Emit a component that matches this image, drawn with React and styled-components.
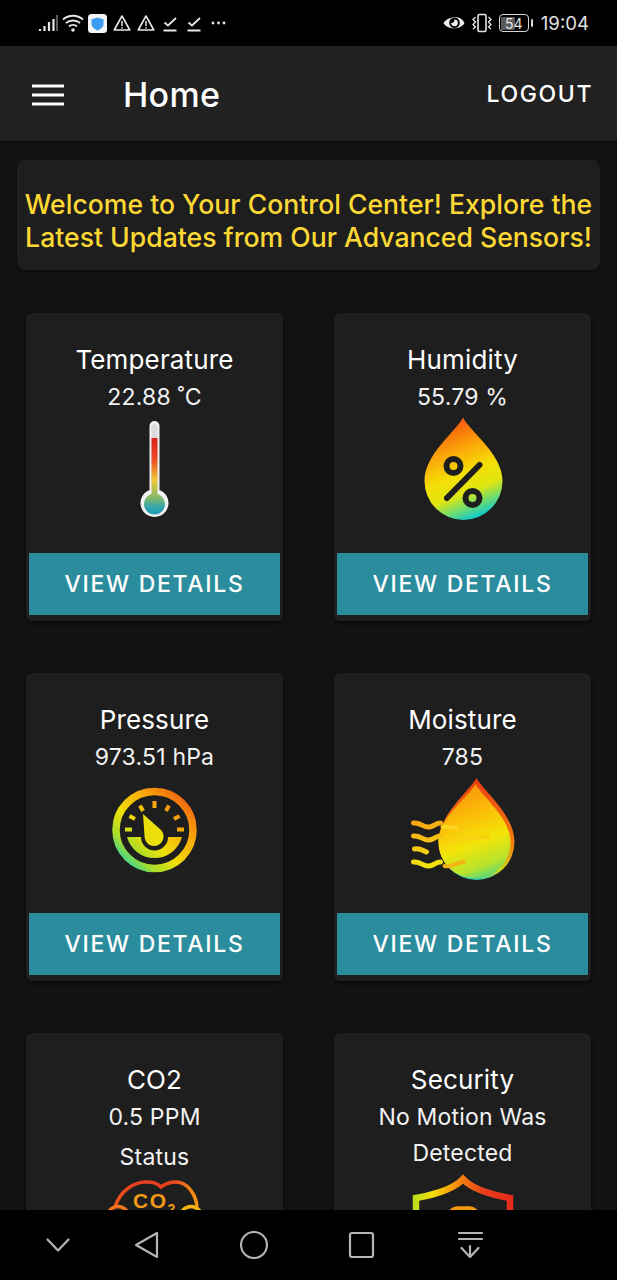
import React from "react";
import styled, { createGlobalStyle } from "styled-components";

const GlobalStyle = createGlobalStyle`
	html, body {
		margin: 0;
		padding: 0;
		background: #121212;
	}
	* {
		box-sizing: border-box;
	}
`;

const Screen = styled.div`
	width: 617px;
	height: 1280px;
	display: flex;
	flex-direction: column;
	overflow: hidden;
	background-color: #121212;
	font-family: "Inter", "Noto Sans", sans-serif;
	color: #fff;
`;

const StatusBar = styled.div`
	height: 46px;
	flex: none;
	background-color: #000;
	display: flex;
	align-items: center;
	justify-content: space-between;
	padding: 0 28px 0 38px;
`;

const StatusGroup = styled.div`
	display: flex;
	align-items: center;
	gap: ${(props) => props.$gap}px;
`;

const Clock = styled.span`
	font-size: 18.6px;
	color: #e0e0e0;
	margin-left: 2px;
`;

const AppBar = styled.header`
	height: 95px;
	flex: none;
	background-color: #212121;
	display: flex;
	align-items: center;
	padding: 2px 24px 0 32px;
	box-shadow: 0 2px 4px rgba(0, 0, 0, 0.4);
	z-index: 1;
`;

const MenuIcon = styled.svg`
	display: block;
	flex: none;
`;

const AppTitle = styled.h1`
	margin: 0 0 0 59px;
	flex: 1;
	font-size: 34px;
	font-weight: 500;
	letter-spacing: 0.3px;
	line-height: 40px;
`;

const LogoutButton = styled.button`
	border: none;
	background: none;
	padding: 0;
	color: #fff;
	font-family: inherit;
	font-size: 23px;
	font-weight: 500;
	letter-spacing: 1.6px;
	margin-bottom: 2px;
`;

const Content = styled.main`
	flex: 1;
	min-height: 0;
	overflow: hidden;
	padding: 19px 17px 0;
`;

const Welcome = styled.div`
	height: 110px;
	background-color: #1e1e1e;
	border-radius: 8px;
	box-shadow: 0 1px 3px rgba(0, 0, 0, 0.4);
	display: flex;
	align-items: center;
	justify-content: center;
	padding-top: 11px;
	text-align: center;
	color: #fdd835;
	font-size: 26.6px;
	font-weight: 500;
	line-height: 33px;
	white-space: nowrap;
`;

const CardGrid = styled.div`
	display: grid;
	grid-template-columns: 257px 257px;
	column-gap: 51px;
	row-gap: 52px;
	margin: 43px 9px 0;
`;

const Card = styled.section`
	height: 308px;
	background-color: #1e1e1e;
	border-radius: 6px;
	box-shadow: 0 2px 4px rgba(0, 0, 0, 0.5);
	display: flex;
	flex-direction: column;
	align-items: center;
	padding: 30px 3px 6px;
	text-align: center;
`;

const CardTitle = styled.h2`
	margin: 0 0 3px;
	font-size: 26px;
	font-weight: 400;
	letter-spacing: 0.15px;
	line-height: 33px;
`;

const CardValue = styled.div`
	font-size: 23px;
	letter-spacing: 0.2px;
	line-height: 36px;
	color: #f2f2f2;
	padding: 0 10px;
`;

const CardStatus = styled.div`
	font-size: 23px;
	letter-spacing: 0.2px;
	line-height: 36px;
	margin-top: 4px;
	color: #f2f2f2;
`;

const Picture = styled.svg`
	display: block;
	flex: none;
	margin-top: ${(props) => props.$top ?? -1}px;
`;

const DetailsButton = styled.button`
	margin-top: auto;
	flex: none;
	width: 100%;
	height: 62px;
	border: none;
	background-color: #2b8c9e;
	color: #fff;
	font-family: inherit;
	font-size: 23px;
	font-weight: 500;
	letter-spacing: 1.7px;
`;

const NavBar = styled.nav`
	height: 70px;
	flex: none;
	background-color: #000;
	display: flex;
	align-items: center;
	gap: 80px;
	padding-left: 44px;
	position: relative;
	z-index: 2;
`;

const NavIcon = styled.svg`
	display: block;
	width: 28px;
	height: 28px;
	fill: none;
	stroke: #b4b4b4;
	stroke-width: 2.2;
	stroke-linecap: round;
	stroke-linejoin: round;
	margin-right: ${(props) => props.$shift || 0}px;
`;

const StatusIcon = styled.svg`
	display: block;
	flex: none;
	fill: none;
	stroke: #e6e6e6;
	stroke-width: 1.6;
	margin-left: ${(props) => props.$left || 0}px;
`;

const BatteryWrap = styled.div`
	display: flex;
	align-items: center;
`;

const BatteryBody = styled.div`
	width: 30px;
	height: 18px;
	border: 1.5px solid #d8d8d8;
	border-radius: 4px;
	padding: 1.5px;
	position: relative;
	display: flex;
	align-items: stretch;
`;

const BatteryFill = styled.div`
	background-color: #5a5a5a;
	border-radius: 1px;
`;

const BatteryLabel = styled.span`
	position: absolute;
	inset: 0;
	display: flex;
	align-items: center;
	justify-content: center;
	font-size: 14px;
	color: #e8e8e8;
`;

const BatteryCap = styled.div`
	width: 2px;
	height: 8px;
	background-color: #d8d8d8;
	border-radius: 1px;
	margin-left: 2px;
`;

function Signal() {
	return (
		<StatusIcon width="20" height="20" viewBox="0 0 20 20">
			<path d="M2 18v-2M6.5 18v-5M11 18V9M15.5 18V6" strokeWidth="2.2" />
			<path d="M19 18V2" stroke="#777" strokeWidth="1.5" />
		</StatusIcon>
	);
}

function Wifi() {
	return (
		<StatusIcon width="22" height="22" viewBox="0 0 22 22">
			<path d="M1 7.5c5.5-5 14.5-5 20 0M4 11c3.8-3.4 10.2-3.4 14 0M7 14.5c2.3-2 5.7-2 8 0" strokeWidth="1.9" />
			<circle cx="11" cy="18" r="1.8" fill="#e6e6e6" stroke="none" />
		</StatusIcon>
	);
}

function AppShield() {
	return (
		<StatusIcon width="19" height="19" viewBox="0 0 19 19">
			<rect width="19" height="19" rx="3.5" fill="#f5f5f5" stroke="none" />
			<path d="M9.5 3.5l6 1.8v4.7c0 3-2.6 5-6 6.5-3.4-1.5-6-3.5-6-6.5V5.300z" fill="#3d9df2" stroke="none" />
		</StatusIcon>
	);
}

function Warning() {
	return (
		<StatusIcon width="18" height="18" viewBox="0 0 18 18" $left={2}>
			<path d="M9 2L16.8 16H1.2z" strokeLinejoin="round" />
			<path d="M9 7v5M9 13v1.5" strokeWidth="1.5" />
		</StatusIcon>
	);
}

function Done({ left }) {
	return (
		<StatusIcon width="14" height="17" viewBox="0 0 14 17" $left={left}>
			<path d="M1.5 7.5l3.5 3L13 3" strokeWidth="1.8" />
			<path d="M0.5 15.5h13" strokeWidth="2" />
		</StatusIcon>
	);
}

function Dots() {
	return (
		<StatusIcon width="15" height="4" viewBox="0 0 15 4" $left={6}>
			<circle cx="2" cy="2" r="1.4" fill="#e6e6e6" stroke="none" />
			<circle cx="7.5" cy="2" r="1.4" fill="#e6e6e6" stroke="none" />
			<circle cx="13" cy="2" r="1.4" fill="#e6e6e6" stroke="none" />
		</StatusIcon>
	);
}

function Eye() {
	return (
		<StatusIcon width="22" height="16" viewBox="0 0 22 16">
			<path d="M0.5 8C4 1.5 18-1 21.5 8 18 15 4 15 0.5 8z" fill="#eee" stroke="none" />
			<circle cx="11.5" cy="7.8" r="5.3" fill="#000" stroke="none" />
			<path d="M11.5 4.4a3.4 3.4 0 1 1-3.4 3.4c1.5.8 3.7-1.3 3.4-3.4z" fill="#eee" stroke="none" />
		</StatusIcon>
	);
}

function Vibrate() {
	return (
		<StatusIcon width="22" height="20" viewBox="0 0 22 20">
			<rect x="7" y="1.5" width="8" height="17" rx="1.5" />
			<path d="M4.5 4L2 6.5 4.5 9 2 11.5 4.5 14 2 16M17.5 4L20 6.5 17.5 9 20 11.5 17.5 14 20 16" strokeWidth="1.3" />
		</StatusIcon>
	);
}

function Battery({ level }) {
	return (
		<BatteryWrap>
			<BatteryBody>
				<BatteryFill style={{ width: `${level}%` }} />
				<BatteryLabel>{level}</BatteryLabel>
			</BatteryBody>
			<BatteryCap />
		</BatteryWrap>
	);
}

function Menu() {
	return (
		<MenuIcon width="32" height="22" viewBox="0 0 32 22">
			<path d="M0 2h32M0 11h32M0 20h32" stroke="#fff" strokeWidth="3.2" />
		</MenuIcon>
	);
}

function Thermometer() {
	return (
		<Picture width="110" height="116" viewBox="0 4 110 116">
			<defs>
				<linearGradient id="thermo" x1="0" y1="0" x2="0" y2="1">
					<stop offset="0" stopColor="#d9231f" />
					<stop offset="0.28" stopColor="#ee4b22" />
					<stop offset="0.55" stopColor="#efc637" />
					<stop offset="0.78" stopColor="#86b96b" />
					<stop offset="0.9" stopColor="#35a7ab" />
					<stop offset="1" stopColor="#1f9cb8" />
				</linearGradient>
			</defs>
			<path d="M49.5 80V16a5 5 0 0 1 10 0v64a14 14 0 1 1-10 0z" fill="#f2f2f2" />
			<path d="M51.5 81V17a3 3 0 0 1 6 0v64z" fill="#dcdcdc" />
			<path d="M51.5 28h6v56a10.5 10.5 0 1 1-6 0z" fill="url(#thermo)" />
		</Picture>
	);
}

function HumidityDrop() {
	return (
		<Picture width="110" height="116" viewBox="-2.5 4 110 116">
			<defs>
				<linearGradient id="humid" gradientUnits="userSpaceOnUse" x1="32" y1="10" x2="70" y2="106">
					<stop offset="0" stopColor="#f2480e" />
					<stop offset="0.3" stopColor="#fba00a" />
					<stop offset="0.55" stopColor="#f6de05" />
					<stop offset="0.74" stopColor="#dfe612" />
					<stop offset="0.88" stopColor="#6cdc72" />
					<stop offset="1" stopColor="#0fc9cf" />
				</linearGradient>
			</defs>
			<path d="M52.5 7.5C46 21 14 44 14 71a39 39 0 0 0 78 0C92 44 59 21 52.5 7.5z" fill="url(#humid)" />
			<g fill="none" stroke="#1e1e1e" strokeWidth="6" strokeLinecap="round">
				<circle cx="43" cy="56" r="7" />
				<circle cx="62" cy="88" r="7" />
				<path d="M69 55L36.5 88" />
			</g>
		</Picture>
	);
}

function Gauge() {
	return (
		<Picture width="110" height="110" viewBox="0 0 110 110" $top={0}>
			<defs>
				<linearGradient id="gauge" gradientUnits="userSpaceOnUse" x1="88" y1="20" x2="22" y2="90">
					<stop offset="0" stopColor="#ef5a10" />
					<stop offset="0.3" stopColor="#f9a80b" />
					<stop offset="0.6" stopColor="#efdf08" />
					<stop offset="0.82" stopColor="#a6dd2c" />
					<stop offset="1" stopColor="#1bd0b2" />
				</linearGradient>
			</defs>
			<circle cx="54.5" cy="55" r="38.5" fill="none" stroke="url(#gauge)" strokeWidth="7.5" />
			<path d="M27 62A28.5 28.5 0 0 0 82 62H68A13.5 13.5 0 0 1 41 62z" fill="url(#gauge)" />
			<path d="M43 39L61 55A9.5 9.5 0 1 1 44.7 63z" fill="#eadf0a" />
			<path
				d="M25 54.5h7M29.5 41l5.5 3M40 30.5l3 5.500M54.5 26v7M69 30.5l-3 5.500M79.5 41l-5.500 3M84 54.5h-7"
				fill="none"
				stroke="url(#gauge)"
				strokeWidth="4"
			/>
		</Picture>
	);
}

function MoistureDrop() {
	return (
		<Picture width="130" height="116" viewBox="-2.5 4 130 116">
			<defs>
				<linearGradient id="moistFill" gradientUnits="userSpaceOnUse" x1="58" y1="10" x2="95" y2="108">
					<stop offset="0" stopColor="#f98a0c" />
					<stop offset="0.35" stopColor="#fbbc08" />
					<stop offset="0.62" stopColor="#f4e408" />
					<stop offset="0.85" stopColor="#b7e32c" />
					<stop offset="1" stopColor="#3fd690" />
				</linearGradient>
				<linearGradient id="moistEdge" gradientUnits="userSpaceOnUse" x1="76" y1="8" x2="60" y2="110">
					<stop offset="0" stopColor="#e83a12" />
					<stop offset="0.6" stopColor="#f3850e" />
					<stop offset="0.85" stopColor="#c8dc1a" />
					<stop offset="1" stopColor="#17c8cf" />
				</linearGradient>
				<linearGradient id="moistWave" gradientUnits="userSpaceOnUse" x1="20" y1="50" x2="30" y2="95">
					<stop offset="0" stopColor="#f9a414" />
					<stop offset="1" stopColor="#f1e210" />
				</linearGradient>
			</defs>
			<path d="M76 8C68 22 38 45 38 72a38 38 0 0 0 76 0C114 45 84 22 76 8z" fill="url(#moistEdge)" />
			<path d="M75 14C67 28 38 48 38 72c0 20 16 36 36 36s36-16 36-36C110 48 83 28 75 14z" fill="url(#moistFill)" />
			<g fill="none" strokeWidth="5" strokeLinecap="round">
				<path d="M13 53c7-1 10 5 16 4s6-4 11-4" stroke="url(#moistWave)" />
				<path d="M13 66c7-1 10 5 16 4s6-4 11-4" stroke="url(#moistWave)" />
				<path d="M14 79c4-1 8 1 12 3" stroke="url(#moistWave)" />
				<path d="M13 92c7-1 10 5 16 4s6-4 11-4" stroke="url(#moistWave)" />
			</g>
			<g fill="none" strokeWidth="4" strokeLinecap="round">
				<path d="M42 57c6-1 8 2 14 0" stroke="#fbd21c" />
				<path d="M50 70c8 0 20-2 38-3" stroke="#f8d210" />
				<path d="M44 96c4 2 10-3 19-4" stroke="#f4b414" />
			</g>
		</Picture>
	);
}

function Co2Cloud() {
	return (
		<Picture width="130" height="60" viewBox="0 9 130 60" $top={-1}>
			<defs>
				<linearGradient id="cloud" gradientUnits="userSpaceOnUse" x1="10" y1="0" x2="120" y2="0">
					<stop offset="0" stopColor="#f26a12" />
					<stop offset="0.3" stopColor="#e8401f" />
					<stop offset="0.65" stopColor="#e8401f" />
					<stop offset="0.85" stopColor="#f28a12" />
					<stop offset="1" stopColor="#f6c40c" />
				</linearGradient>
			</defs>
			<path
				d="M25 42C30 26 44 16 58 17c5 0 10 2 13 5 4-3 9-5 15-5 11 0 20 12 21 25"
				fill="none"
				stroke="url(#cloud)"
				strokeWidth="3.5"
			/>
			<circle cx="28" cy="52" r="10.5" fill="none" stroke="#f1741a" strokeWidth="3.5" />
			<circle cx="101" cy="52" r="10.5" fill="none" stroke="#f5b612" strokeWidth="3.5" />
			<text x="43" y="43" fontFamily="Liberation Sans" fontWeight="700" fontSize="21" letterSpacing="1.5" fill="#f39a1a">
				CO
				<tspan dy="6" fontSize="14">
					2
				</tspan>
			</text>
		</Picture>
	);
}

function SecurityShield() {
	return (
		<Picture width="135" height="60" viewBox="0 5 135 60" $top={0}>
			<defs>
				<linearGradient id="shield" gradientUnits="userSpaceOnUse" x1="18" y1="0" x2="118" y2="0">
					<stop offset="0" stopColor="#b8e01c" />
					<stop offset="0.2" stopColor="#f4dc08" />
					<stop offset="0.45" stopColor="#f58a0e" />
					<stop offset="0.7" stopColor="#e8401a" />
					<stop offset="1" stopColor="#e62a1c" />
				</linearGradient>
			</defs>
			<path d="M21 65V32C38 29 58 24 68 13c10 11 30 16 47 19v33" fill="none" stroke="url(#shield)" strokeWidth="6.5" />
			<path d="M56 60V49a6 6 0 0 1 6-6h13a6 6 0 0 1 6 6v11" fill="none" stroke="#f59a10" strokeWidth="5.5" />
		</Picture>
	);
}

const sensors = [
	{ title: "Temperature", value: "22.88 ˚C", Icon: Thermometer },
	{ title: "Humidity", value: "55.79 %", Icon: HumidityDrop },
	{ title: "Pressure", value: "973.51 hPa", Icon: Gauge },
	{ title: "Moisture", value: "785", Icon: MoistureDrop },
	{ title: "CO2", value: "0.5 PPM", status: "Status", Icon: Co2Cloud },
	{ title: "Security", value: "No Motion Was Detected", Icon: SecurityShield },
];

function App() {
	return (
		<Screen>
			<GlobalStyle />
			<StatusBar>
				<StatusGroup $gap={4}>
					<Signal />
					<Wifi />
					<AppShield />
					<Warning />
					<Warning />
					<Done left={4} />
					<Done left={6} />
					<Dots />
				</StatusGroup>
				<StatusGroup $gap={6}>
					<Eye />
					<Vibrate />
					<Battery level={54} />
					<Clock>19:04</Clock>
				</StatusGroup>
			</StatusBar>
			<AppBar>
				<Menu />
				<AppTitle>Home</AppTitle>
				<LogoutButton>LOGOUT</LogoutButton>
			</AppBar>
			<Content>
				<Welcome>
					Welcome to Your Control Center! Explore the
					<br />
					Latest Updates from Our Advanced Sensors!
				</Welcome>
				<CardGrid>
					{sensors.map(({ title, value, status, Icon }) => (
						<Card key={title}>
							<CardTitle>{title}</CardTitle>
							<CardValue>{value}</CardValue>
							{status && <CardStatus>{status}</CardStatus>}
							<Icon />
							<DetailsButton>VIEW DETAILS</DetailsButton>
						</Card>
					))}
				</CardGrid>
			</Content>
			<NavBar>
				<NavIcon viewBox="0 0 28 28" $shift={-20}>
					<path d="M3.5 8.5L14 19.5 24.5 8.5" />
				</NavIcon>
				<NavIcon viewBox="0 0 28 28">
					<path d="M25 2v24L4 14z" />
				</NavIcon>
				<NavIcon viewBox="0 0 28 28">
					<circle cx="14" cy="14" r="13" />
				</NavIcon>
				<NavIcon viewBox="0 0 28 28">
					<rect x="2" y="2" width="23" height="24" rx="2" />
				</NavIcon>
				<NavIcon viewBox="0 0 28 28">
					<path d="M3 2h23M3 8h23M14 15v11M5.5 17l8.500 9 8.500-9" />
				</NavIcon>
			</NavBar>
		</Screen>
	);
}

export default App;
